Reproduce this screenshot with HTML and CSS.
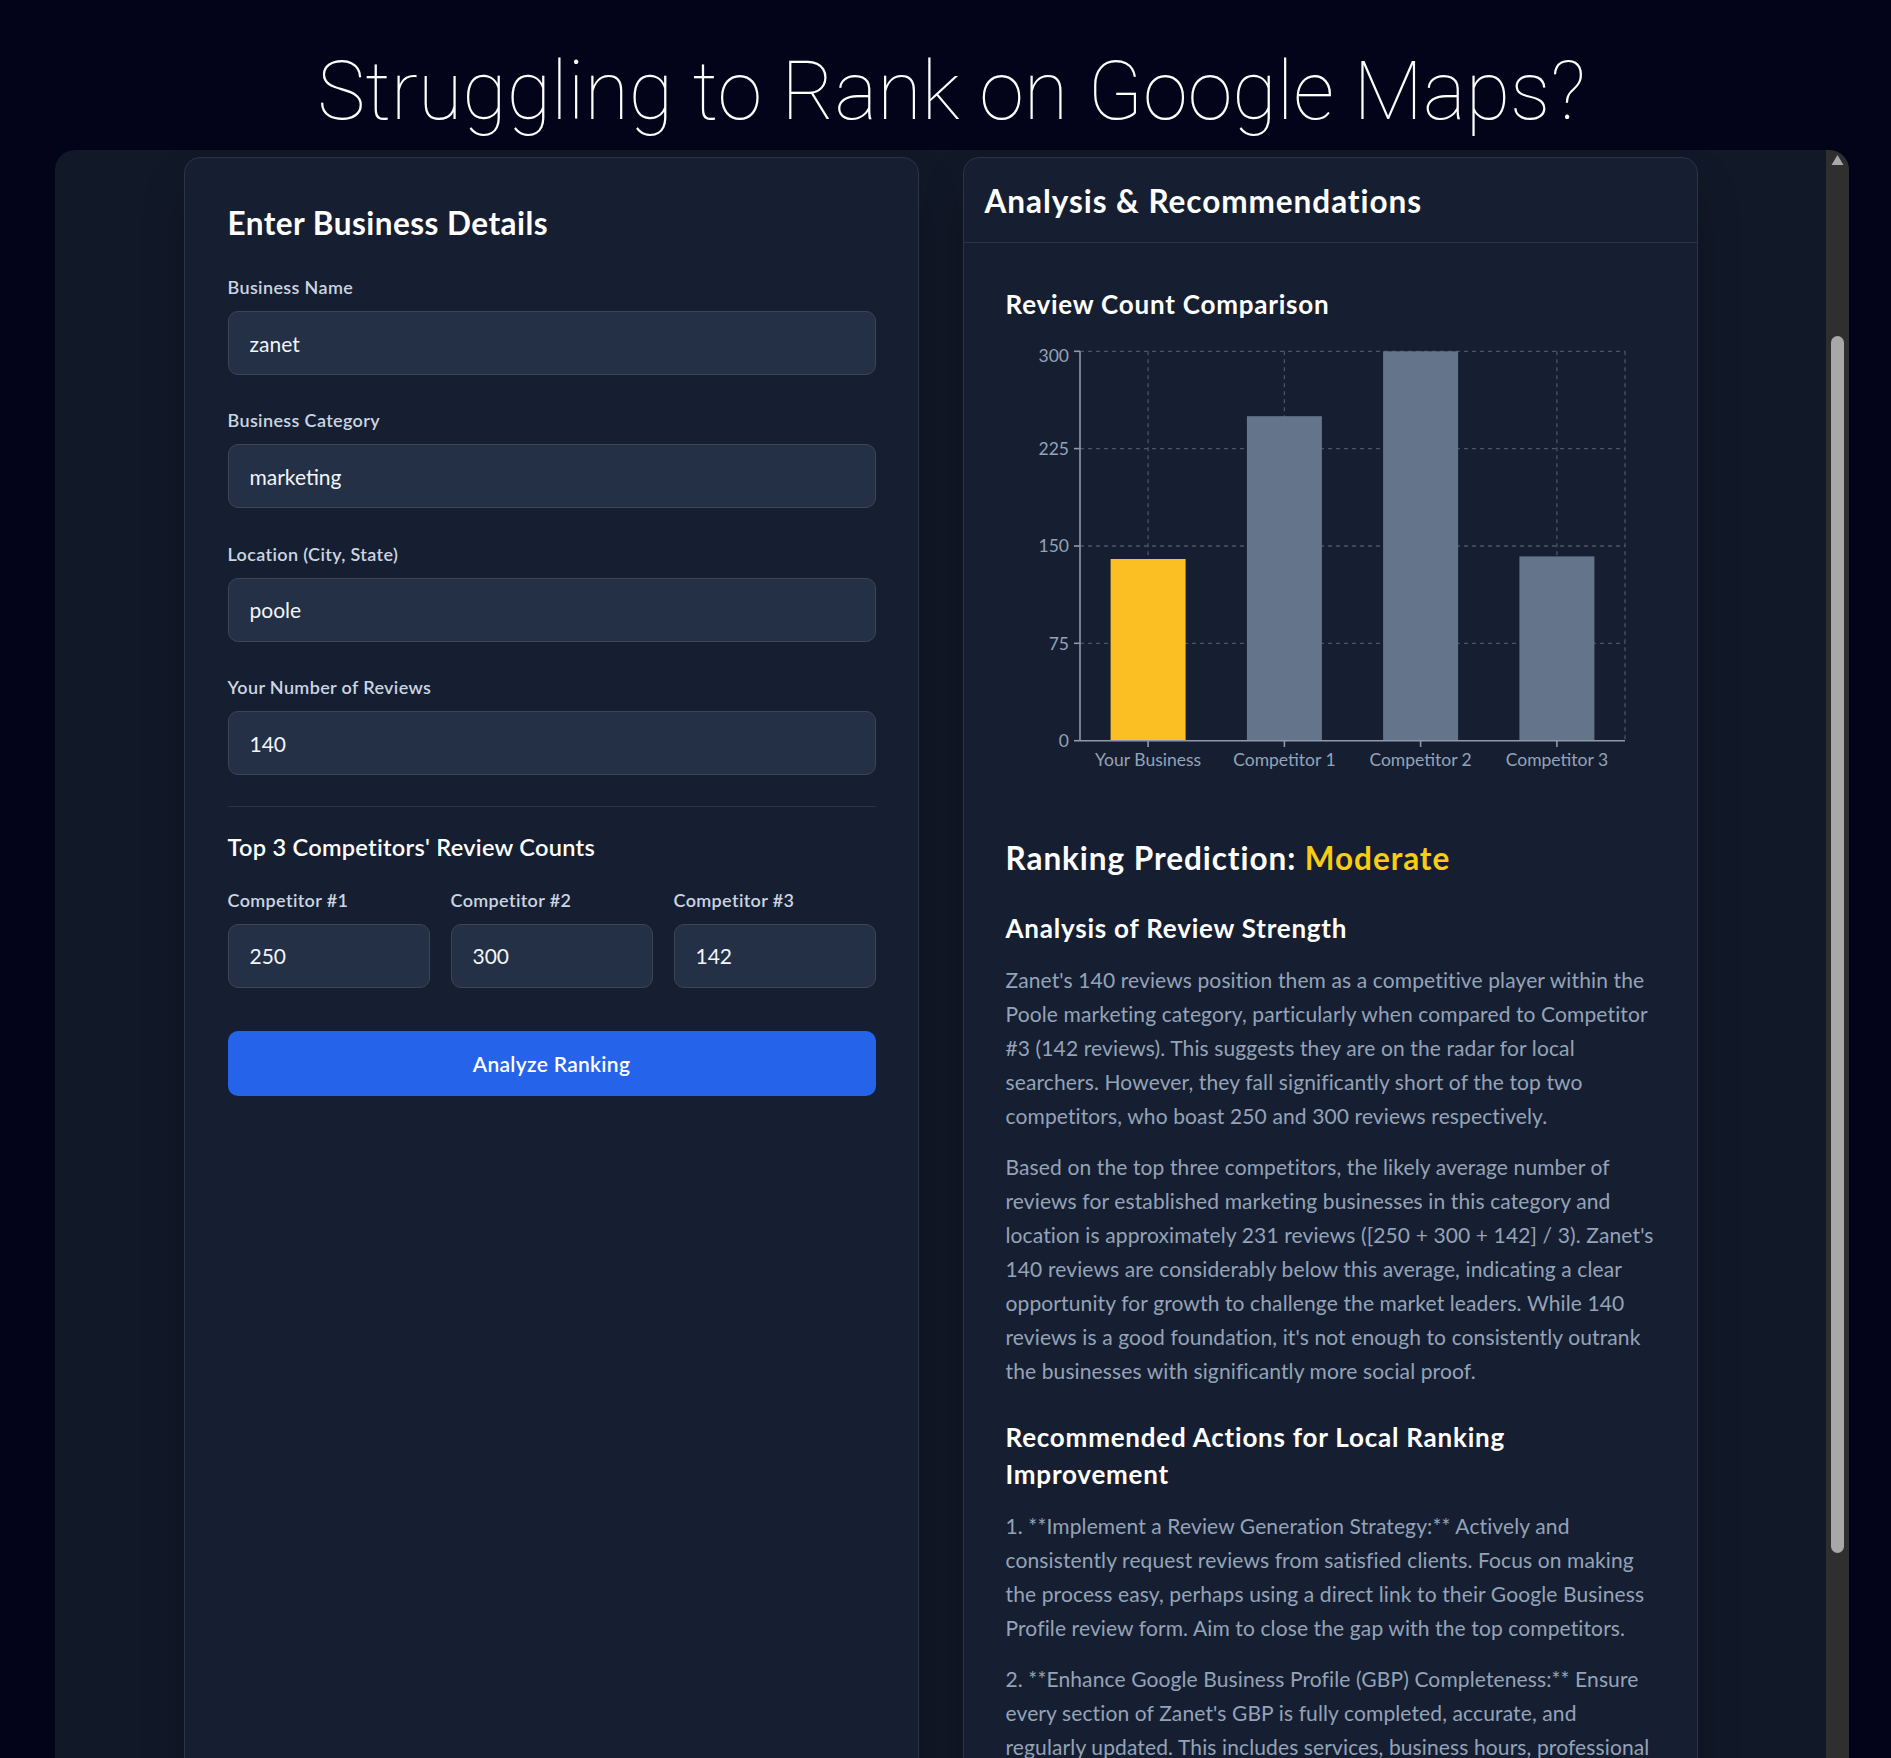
FILE: index.html
```html
<!DOCTYPE html>
<html lang="en">
<head>
    <meta charset="UTF-8">
    <meta name="viewport" content="width=device-width, initial-scale=1.0">
    <title>Google Maps Ranking Checker</title>
    <link rel="stylesheet" href="styles.css">
</head>
<body>
    <h1 class="hero-title">Struggling to Rank on Google Maps?</h1>

    <div class="panel">
        <div class="panel-body">
            <div class="columns">
                <section class="card form-card">
                    <h2 class="card-title">Enter Business Details</h2>

                    <div class="fields">
                        <div class="field">
                            <label for="name">Business Name</label>
                            <input type="text" id="name" value="zanet">
                        </div>
                        <div class="field">
                            <label for="category">Business Category</label>
                            <input type="text" id="category" value="marketing">
                        </div>
                        <div class="field">
                            <label for="location">Location (City, State)</label>
                            <input type="text" id="location" value="poole">
                        </div>
                        <div class="field">
                            <label for="reviews">Your Number of Reviews</label>
                            <input type="text" id="reviews" value="140">
                        </div>
                    </div>

                    <div class="competitors">
                        <h3>Top 3 Competitors' Review Counts</h3>
                        <div class="competitor-grid">
                            <div class="field-sm">
                                <label for="c1">Competitor #1</label>
                                <input type="text" id="c1" value="250">
                            </div>
                            <div class="field-sm">
                                <label for="c2">Competitor #2</label>
                                <input type="text" id="c2" value="300">
                            </div>
                            <div class="field-sm">
                                <label for="c3">Competitor #3</label>
                                <input type="text" id="c3" value="142">
                            </div>
                        </div>
                    </div>

                    <button class="analyze-btn">Analyze Ranking</button>
                </section>

                <section class="card results-card">
                    <div class="results-head">
                        <h2 class="card-title">Analysis &amp; Recommendations</h2>
                    </div>
                    <div class="results-body">
                        <h3 class="chart-title">Review Count Comparison</h3>

                        <svg class="chart" width="651" height="460" viewBox="0 0 651 460">
                            <g class="grid">
                                <line x1="74" y1="303.3" x2="619" y2="303.3"/>
                                <line x1="74" y1="206" x2="619" y2="206"/>
                                <line x1="74" y1="108.6" x2="619" y2="108.6"/>
                                <line x1="74" y1="11.3" x2="619" y2="11.3"/>
                                <line x1="142.1" y1="11.3" x2="142.1" y2="400.7"/>
                                <line x1="278.4" y1="11.3" x2="278.4" y2="400.7"/>
                                <line x1="414.6" y1="11.3" x2="414.6" y2="400.7"/>
                                <line x1="550.9" y1="11.3" x2="550.9" y2="400.7"/>
                                <line x1="619" y1="11.3" x2="619" y2="400.7"/>
                            </g>
                            <rect class="bar-you" x="104.6" y="219" width="75" height="181.7"/>
                            <rect class="bar-comp" x="240.9" y="76.2" width="75" height="324.5"/>
                            <rect class="bar-comp" x="377.1" y="11.3" width="75" height="389.4"/>
                            <rect class="bar-comp" x="513.4" y="216.4" width="75" height="184.3"/>
                            <g class="axis">
                                <line x1="74" y1="11.3" x2="74" y2="400.7"/>
                                <line x1="74" y1="400.7" x2="619" y2="400.7"/>
                                <line x1="68" y1="400.7" x2="74" y2="400.7"/>
                                <line x1="68" y1="303.3" x2="74" y2="303.3"/>
                                <line x1="68" y1="206" x2="74" y2="206"/>
                                <line x1="68" y1="108.6" x2="74" y2="108.6"/>
                                <line x1="68" y1="11.3" x2="74" y2="11.3"/>
                                <line x1="142.1" y1="400.7" x2="142.1" y2="407"/>
                                <line x1="278.4" y1="400.7" x2="278.4" y2="407"/>
                                <line x1="414.6" y1="400.7" x2="414.6" y2="407"/>
                                <line x1="550.9" y1="400.7" x2="550.9" y2="407"/>
                            </g>
                            <g class="tick-y">
                                <text x="63" y="407">0</text>
                                <text x="63" y="309.5">75</text>
                                <text x="63" y="212">150</text>
                                <text x="63" y="114.8">225</text>
                                <text x="63" y="21.5">300</text>
                            </g>
                            <g class="tick-x">
                                <text x="142.1" y="426">Your Business</text>
                                <text x="278.4" y="426">Competitor 1</text>
                                <text x="414.6" y="426">Competitor 2</text>
                                <text x="550.9" y="426">Competitor 3</text>
                            </g>
                        </svg>

                        <h2 class="prediction">Ranking Prediction: <span>Moderate</span></h2>

                        <h3>Analysis of Review Strength</h3>
                        <p>Zanet's 140 reviews position them as a competitive player within the Poole marketing category, particularly when compared to Competitor #3 (142 reviews). This suggests they are on the radar for local searchers. However, they fall significantly short of the top two competitors, who boast 250 and 300 reviews respectively.</p>
                        <p>Based on the top three competitors, the likely average number of reviews for established marketing businesses in this category and location is approximately 231 reviews ([250 + 300 + 142] / 3). Zanet's 140 reviews are considerably below this average, indicating a clear opportunity for growth to challenge the market leaders. While 140 reviews is a good foundation, it's not enough to consistently outrank the businesses with significantly more social proof.</p>

                        <h3>Recommended Actions for Local Ranking Improvement</h3>
                        <p>1. **Implement a Review Generation Strategy:** Actively and consistently request reviews from satisfied clients. Focus on making the process easy, perhaps using a direct link to their Google Business Profile review form. Aim to close the gap with the top competitors.</p>
                        <p>2. **Enhance Google Business Profile (GBP) Completeness:** Ensure every section of Zanet's GBP is fully completed, accurate, and regularly updated. This includes services, business hours, professional photos, and a keyword-rich business description.</p>
                        <p>3. **Respond to Every Review:** Reply promptly and professionally to all reviews, positive or negative, to show engagement and build trust with potential clients.</p>
                    </div>
                </section>
            </div>
        </div>

        <div class="scrollbar">
            <svg class="scroll-arrow" width="23" height="20" viewBox="0 0 23 20">
                <path d="M11.5 5 L17.5 15 L5.5 15 Z"/>
            </svg>
            <div class="scroll-thumb"></div>
        </div>
    </div>
</body>
</html>
```

FILE: styles.css
```css
body {
    margin: 0;
    background: #03041a;
    font-family: 'Lato', sans-serif;
    color: #f1f5f9;
    height: 1758px;
    overflow: hidden;
}

.hero-title {
    margin: 51px 0 18px;
    padding-left: 12px;
    text-align: center;
    font-family: 'Roboto', sans-serif;
    font-weight: 100;
    font-size: 81px;
    line-height: 1;
    color: #fff;
}

.panel {
    display: flex;
    margin: 0 42px 0 55px;
    height: 1608px;
    background: #111827;
    border-radius: 20px 20px 0 0;
    overflow: hidden;
}

.panel-body {
    flex: 1;
    padding-top: 7px;
}

.columns {
    display: grid;
    grid-template-columns: 1fr 1fr;
    gap: 44px;
    max-width: 1514px;
    margin: 0 auto;
}

.card {
    background: #161f31;
    border: 1px solid #2a3446;
    border-radius: 16px;
    box-shadow: 0 25px 50px -12px rgba(0, 0, 0, 0.35);
}

.card-title {
    margin: 0;
    font-size: 31.5px;
    line-height: 42px;
    font-weight: 700;
    letter-spacing: 0.03em;
    color: #fff;
}

/* form side */
.form-card {
    padding: 44px 42px 42px 43px;
}

.form-card .card-title {
    margin-bottom: 30px;
    letter-spacing: 0.015em;
}

.fields {
    display: grid;
    gap: 32.4px;
    margin-bottom: 30.5px;
}

label {
    display: block;
    margin-bottom: 11px;
    font-size: 18px;
    line-height: 26px;
    font-weight: 600;
    letter-spacing: 0.02em;
    color: #cbd5e1;
}

input {
    display: block;
    box-sizing: border-box;
    width: 100%;
    height: 64px;
    padding: 0 21px;
    background: #243045;
    border: 1px solid #3a4558;
    border-radius: 10px;
    font-family: inherit;
    font-size: 21px;
    color: #f1f5f9;
    outline: none;
}

.competitors {
    border-top: 1px solid #2a3446;
    padding-top: 22px;
}

.competitors h3 {
    margin: 0 0 22px;
    font-size: 23.6px;
    line-height: 36px;
    font-weight: 600;
    letter-spacing: 0.011em;
    color: #fff;
}

.competitor-grid {
    display: grid;
    grid-template-columns: repeat(3, 1fr);
    gap: 21px;
}

.analyze-btn {
    display: block;
    width: 100%;
    height: 65px;
    margin-top: 43px;
    background: #2563eb;
    border: none;
    border-radius: 10px;
    font-family: inherit;
    font-size: 21px;
    font-weight: 600;
    letter-spacing: 0.3px;
    color: #fff;
}

/* results side */
.results-head {
    padding: 22px 21px 20px;
    border-bottom: 1px solid #2a3446;
}

.results-body {
    padding: 43px 40px 42px 42px;
}

.results-body h3 {
    margin: 31px 0 16.5px;
    font-size: 26px;
    line-height: 36.4px;
    font-weight: 700;
    letter-spacing: 0.03em;
    color: #fff;
}

.results-body .chart-title {
    margin: 0 0 17.5px;
}

.chart {
    display: block;
}

.chart .grid line {
    stroke: #4a5568;
    stroke-width: 1.3;
    stroke-dasharray: 4 4;
}

.chart .axis line {
    stroke: #8f99aa;
    stroke-width: 1.6;
}

.bar-you {
    fill: #fbbf24;
}

.bar-comp {
    fill: #64748b;
}

.chart text {
    font-family: 'Lato', sans-serif;
    font-size: 17.5px;
    fill: #94a3b8;
}

.tick-y text {
    text-anchor: end;
}

.tick-x text {
    text-anchor: middle;
}

.prediction {
    margin: 37px 0 0;
    font-size: 31.5px;
    line-height: 42px;
    font-weight: 700;
    letter-spacing: 0.03em;
    color: #fff;
}

.prediction span {
    color: #facc15;
}

.results-body p {
    margin: 0 0 16.5px;
    font-size: 21px;
    line-height: 34.1px;
    letter-spacing: 0.12px;
    color: #94a3b8;
}

/* fake scrollbar of the panel */
.scrollbar {
    flex: 0 0 23px;
    background: #2f2f2f;
}

.scroll-arrow {
    display: block;
    fill: #a8a8a8;
}

.scroll-thumb {
    width: 13px;
    height: 1217px;
    margin: 166px 0 0 5px;
    background: #a8a8a8;
    border-radius: 7px;
}
```
